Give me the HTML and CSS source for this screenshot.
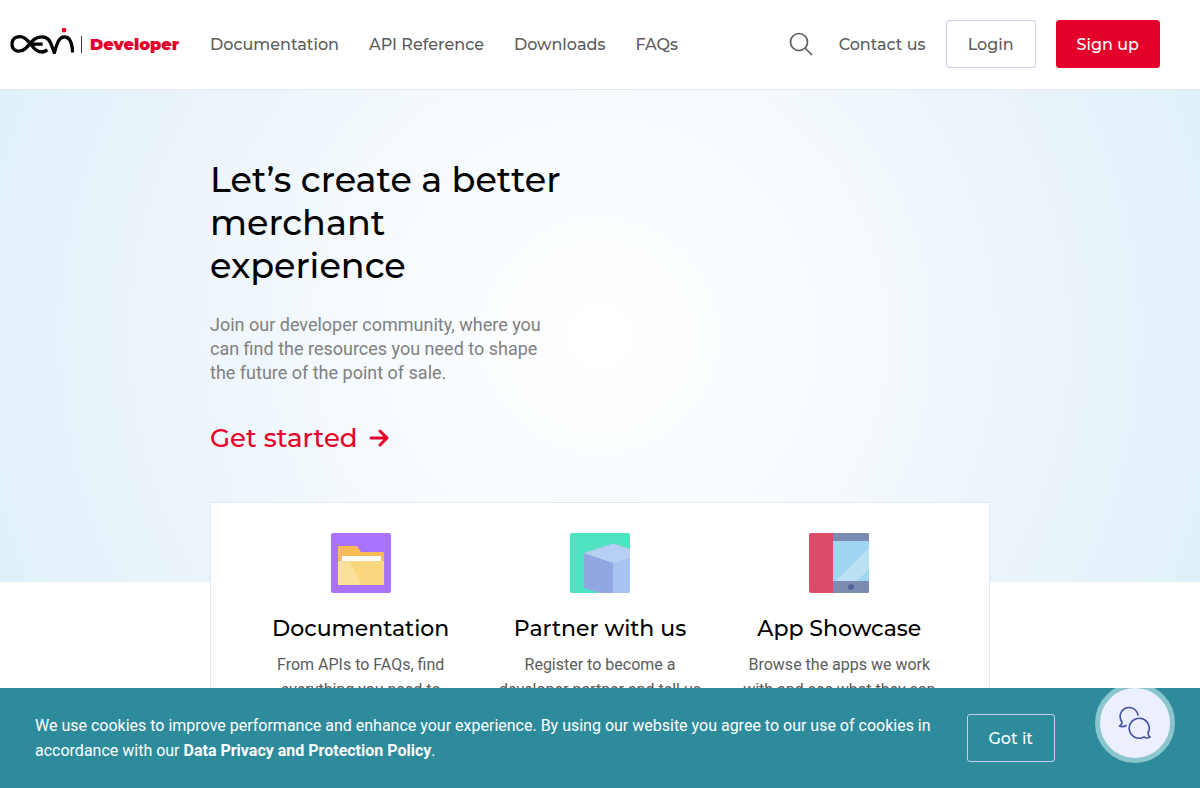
FILE: index.html
```html
<!DOCTYPE html>
<html lang="en">
<head>
<meta charset="utf-8">
<meta name="viewport" content="width=device-width, initial-scale=1">
<title>AEVI Developer</title>
<link rel="stylesheet" href="styles.css">
</head>
<body>
<header class="topbar">
  <a class="logo" href="#" aria-label="AEVI Developer">
    <svg class="logo-mark" viewBox="30 20 192 80" fill="none" stroke="#000" stroke-width="10" aria-hidden="true">
      <path d="M142 88C130 97 116 95 106 87C95 77 87 60 74 53C58 43 36 50 36 71C36 92 59 98 75 85C90 74 99 48 126 49C153 50 153 75 163 96C170 75 175 49 193 49C213 49 217 75 218 96M92 71H128"/>
      <circle cx="192" cy="29" r="7" fill="#e4002b" stroke="none"/>
    </svg>
    <span class="logo-rule"></span>
    <span class="logo-text">Developer</span>
  </a>
  <nav class="links">
    <a href="#">Documentation</a>
    <a href="#">API Reference</a>
    <a href="#">Downloads</a>
    <a href="#">FAQs</a>
  </nav>
  <div class="actions">
    <button class="search" type="button" aria-label="Search">
      <svg viewBox="0 0 24 24" width="24" height="24" fill="none" stroke="#5c5c5c" stroke-width="1.7"><circle cx="10" cy="10" r="8.5"/><path d="M16 16L23 23"/></svg>
    </button>
    <a class="contact" href="#">Contact us</a>
    <button class="btn btn-outline" type="button">Login</button>
    <button class="btn btn-primary" type="button">Sign up</button>
  </div>
</header>
<main>
  <section class="hero">
    <div class="hero-inner">
      <h1>Let’s create a better merchant experience</h1>
      <p>Join our developer community, where you can find the resources you need to shape the future of the point of sale.</p>
      <a class="start" href="#">Get started
        <svg viewBox="0 0 20 18" width="20" height="18" fill="none" stroke="#e4002b" stroke-width="3" stroke-linecap="round" stroke-linejoin="round" aria-hidden="true"><path d="M2 9H18M11 2L18 9L11 16"/></svg>
      </a>
    </div>
  </section>
  <section class="cards">
    <article class="card">
      <svg class="card-icon" viewBox="0 0 60 60" aria-hidden="true">
        <rect width="60" height="60" rx="2" fill="#a972ff"/>
        <path d="M7 13H26L30 19H53V52H7Z" fill="#f7ba55"/>
        <path d="M11 23H50V30H11Z" fill="#fff"/>
        <path d="M7 28H53V52H7Z" fill="#f9d77e"/>
        <path d="M7 28H18L31 52H7Z" fill="#fbe09a"/>
      </svg>
      <h2>Documentation</h2>
      <p>From APIs to FAQs, find everything you need to</p>
    </article>
    <article class="card">
      <svg class="card-icon" viewBox="0 0 60 60" aria-hidden="true">
        <rect width="60" height="60" rx="2" fill="#50e3c2"/>
        <path d="M14 20L43 30V60H30L14 55Z" fill="#90a8df"/>
        <path d="M43 30L60 24V58L58 60H43Z" fill="#a7c3f2"/>
        <path d="M14 20L43 10.500L60 16V24.500L43 30Z" fill="#b8cff4"/>
      </svg>
      <h2>Partner with us</h2>
      <p>Register to become a developer partner and tell us</p>
    </article>
    <article class="card">
      <svg class="card-icon" viewBox="0 0 60 60" aria-hidden="true">
        <rect width="60" height="60" rx="2" fill="#dc4c68"/>
        <path d="M26 0H58Q60 0 60 2V58Q60 60 58 60H26Q24 60 24 58V2Q24 0 26 0Z" fill="#7b8bb0"/>
        <path d="M24 8H60V48H24Z" fill="#a0d5f0"/>
        <path d="M60 15V36L48 48H27Z" fill="#bce1f4"/>
        <circle cx="42" cy="54" r="3" fill="#51659b"/>
      </svg>
      <h2>App Showcase</h2>
      <p>Browse the apps we work with and see what they can</p>
    </article>
  </section>
</main>
<aside class="cookies">
  <p>We use cookies to improve performance and enhance your experience. By using our website you agree to our use of cookies in accordance with our <a href="#">Data Privacy and Protection Policy</a>.</p>
  <button class="btn btn-cookie" type="button">Got it</button>
  <button class="chat" type="button" aria-label="Chat">
    <svg viewBox="0 0 34 34" width="34" height="34" fill="none" stroke="#4251a0" stroke-width="1.600" stroke-linecap="round" stroke-linejoin="round"><path d="M20 9A9 9 0 1 0 4 16Q4 19 1.500 20Q5 21.500 8 19.500"/><path d="M26 31A10 10 0 1 1 30 27Q30 30 32 31Q29 33 26 31Z"/></svg>
  </button>
</aside>
</body>
</html>
```
FILE: styles.css
```css
* { box-sizing: border-box; }
body {
  margin: 0;
  height: 100vh;
  overflow: hidden;
  background: #fff;
  color: #5c5c5c;
  font-family: Roboto, "Liberation Sans", sans-serif;
  font-size: 16px;
}
a { color: inherit; text-decoration: none; }
button { font: inherit; color: inherit; cursor: pointer; }
h1, h2, p { margin: 0; }

.topbar, .btn, h1, h2, .start {
  font-family: Montserrat, Inter, "Liberation Sans", sans-serif;
  font-weight: 500;
}
.topbar {
  display: flex;
  align-items: center;
  height: 90px;
  padding: 0 40px 1px 10px;
  border-bottom: 1px solid #e3e9ec;
}
.logo { display: flex; align-items: center; width: 200px; }
.logo-mark { width: 64px; height: 27px; margin-bottom: 8px; }
.logo-rule { width: 1px; height: 17px; margin: 0 8px 0 7px; background: #333; }
.logo-text { color: #e4002b; font-weight: 900; font-size: 16px; }
.links { display: flex; gap: 30px; }
.actions { display: flex; align-items: center; gap: 20px; margin-left: auto; }
.search { display: flex; padding: 0; margin-right: 6px; border: 0; background: none; }

.btn {
  padding: 0 21px;
  height: 48px;
  border: 1px solid #c8cfee;
  border-radius: 3px;
  background: none;
  font-size: 16px;
}
.btn-primary { padding: 0 20px; border-color: #e4002b; background: #e4002b; color: #fff; }

.hero {
  height: 492px;
  padding-top: 68px;
  background: radial-gradient(circle farthest-corner at center, #fff 0%, #f6fbfe 35%, #ebf4fa 70%, #e1f0f9 100%);
}
.hero-inner { max-width: 780px; margin: 0 auto; }
.hero h1 {
  max-width: 360px;
  color: #000;
  font-size: 35px;
  line-height: 43px;
}
.hero p {
  max-width: 350px;
  margin-top: 26px;
  color: #808080;
  font-size: 18px;
  line-height: 24px;
}
.start {
  display: inline-flex;
  align-items: center;
  gap: 11px;
  margin-top: 37px;
  color: #e4002b;
  font-size: 26px;
  line-height: 32px;
}

.cards {
  position: relative;
  display: grid;
  grid-template-columns: repeat(3, 1fr);
  max-width: 780px;
  min-height: 300px;
  margin: -80px auto 0;
  padding: 30px;
  border: 1px solid #e4ebf0;
  background: #fff;
}
.card { text-align: center; padding: 0 15px; }
.card-icon { display: block; width: 60px; height: 60px; margin: 0 auto 21px; }
.card h2 { color: #000; font-size: 22px; line-height: 30px; }
.card p { margin-top: 8px; line-height: 25px; }

.cookies {
  position: fixed;
  inset: auto 0 0;
  display: flex;
  align-items: center;
  height: 100px;
  padding: 0 25px 0 35px;
  overflow: hidden;
  background: #2e8b9c;
  color: #fff;
}
.cookies p { flex: 1; line-height: 25px; }
.cookies a { font-weight: 700; }
.btn-cookie { margin: 0 40px 0 32px; color: #fff; }
.chat {
  display: grid;
  place-items: center;
  width: 80px;
  height: 80px;
  margin-bottom: 30px;
  padding: 0;
  border: 5px solid #8bc5cd;
  border-radius: 50%;
  background: #ecefff;
}
```
